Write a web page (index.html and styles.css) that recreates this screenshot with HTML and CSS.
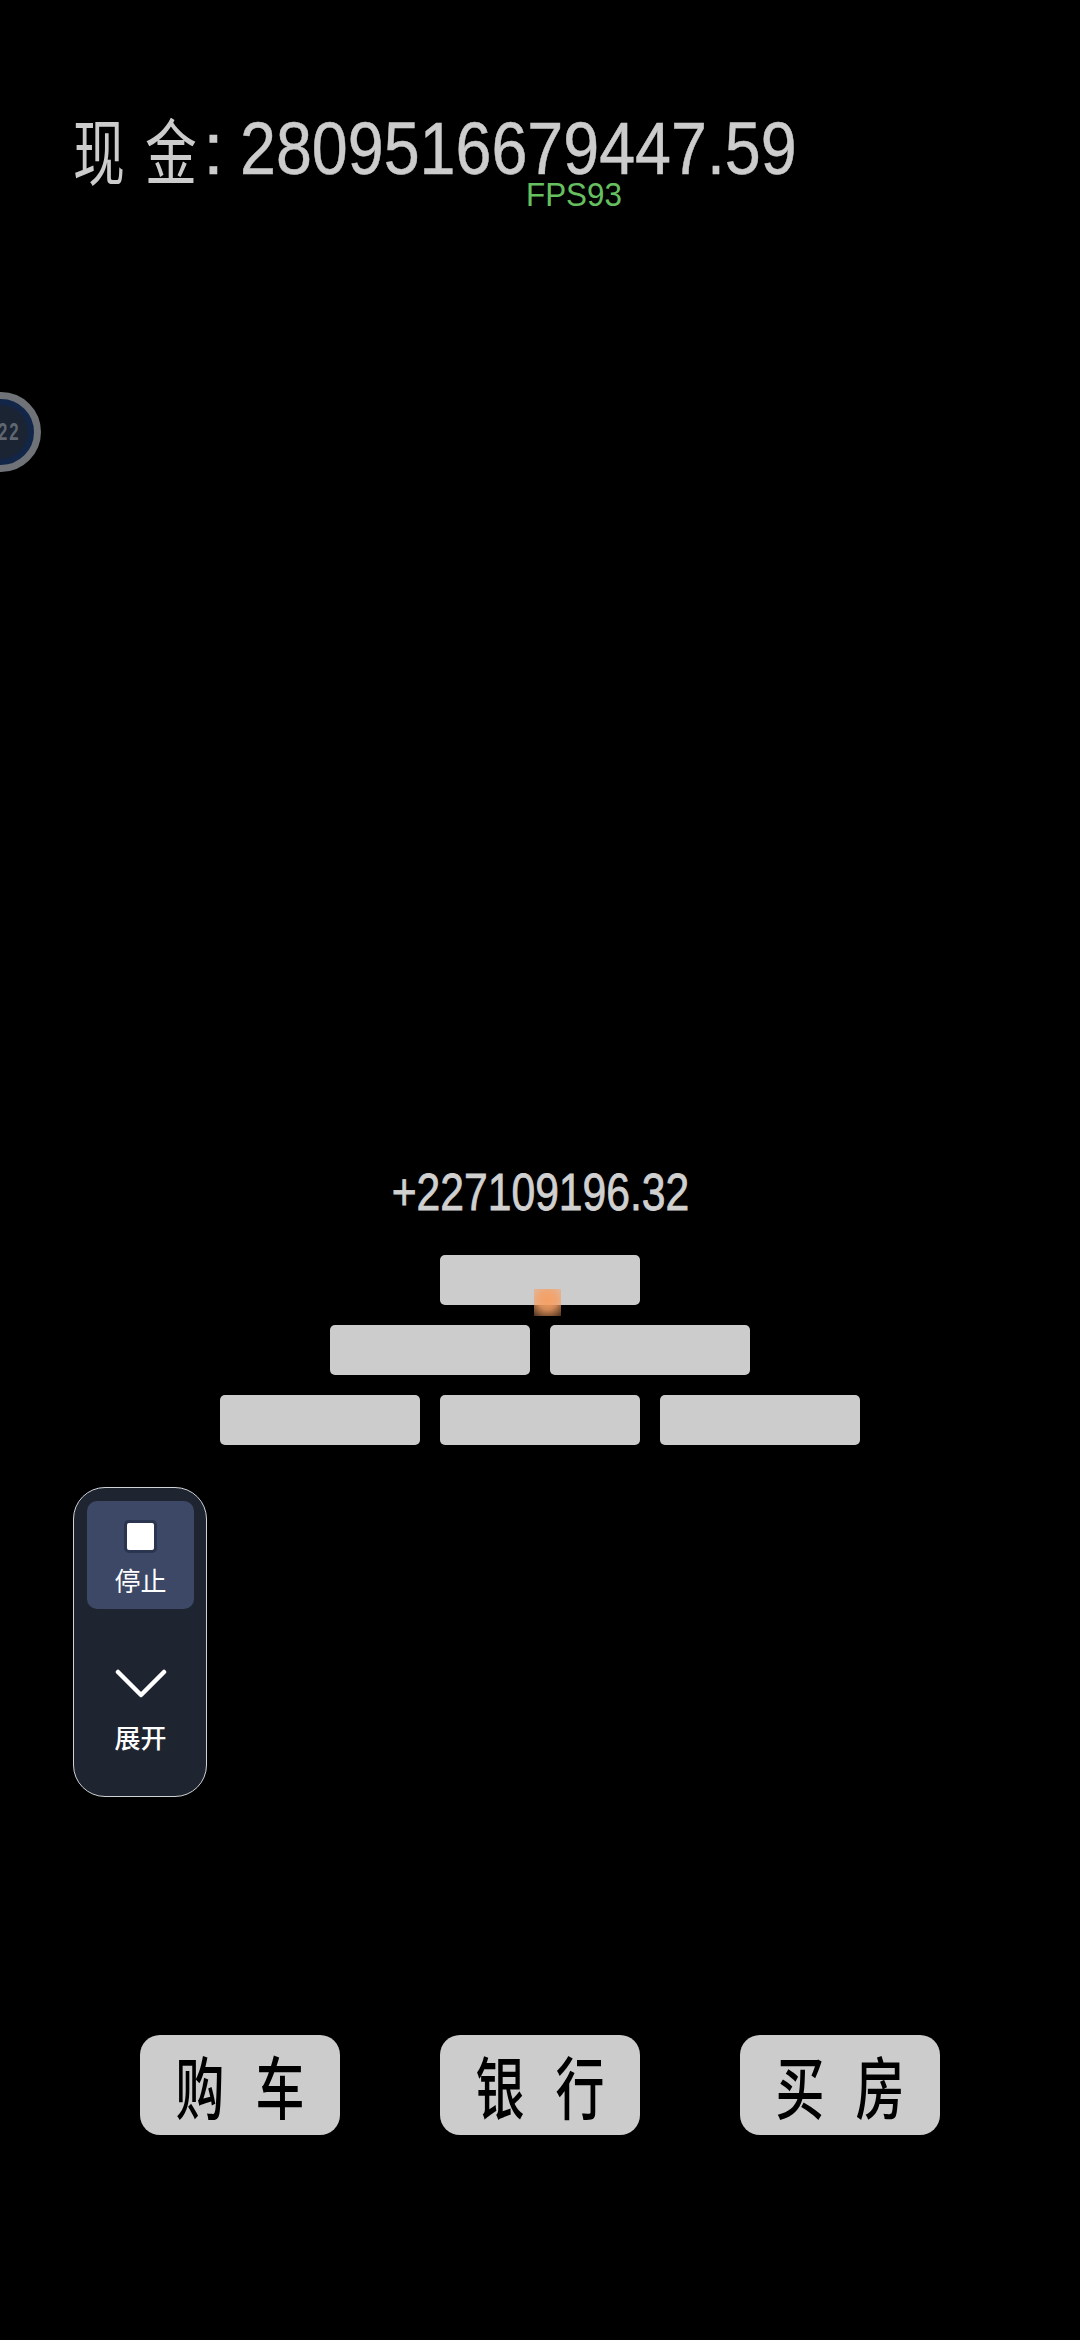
FILE: index.html
```html
<!DOCTYPE html>
<html lang="zh">
<head>
<meta charset="utf-8">
<title>现金</title>
<link rel="stylesheet" href="styles.css">
</head>
<body>
<main class="screen">
  <header class="cash">
    <span class="cash-char">现</span><span class="cash-char">金</span><span class="cash-colon">:</span><span class="cash-value">2809516679447.59</span>
    <span class="fps">FPS93</span>
  </header>

  <aside class="badge"><span class="badge-text">22</span></aside>

  <section class="game">
    <div class="delta"><span class="delta-text">+227109196.32</span></div>
    <div class="pyramid">
      <div class="row"><div class="brick"></div></div>
      <div class="row"><div class="brick"></div><div class="brick"></div></div>
      <div class="row"><div class="brick"></div><div class="brick"></div><div class="brick"></div></div>
      <div class="spark"></div>
    </div>
  </section>

  <section class="panel">
    <div class="panel-btn panel-btn-active">
      <span class="stop-icon"></span>
      <span class="panel-label">停止</span>
    </div>
    <div class="panel-btn">
      <svg class="chevron" viewBox="0 0 52 30" aria-hidden="true"><path d="M3 3 L26 26 L49 3" fill="none" stroke="#fff" stroke-width="4.5" stroke-linecap="round" stroke-linejoin="round"/></svg>
      <span class="panel-label panel-label-strong">展开</span>
    </div>
  </section>

  <nav class="actions">
    <div class="action"><span class="action-char">购</span><span class="action-char">车</span></div>
    <div class="action"><span class="action-char">银</span><span class="action-char">行</span></div>
    <div class="action"><span class="action-char">买</span><span class="action-char">房</span></div>
  </nav>
</main>
</body>
</html>
```
FILE: styles.css
```css
* { box-sizing: border-box; }
html, body { margin: 0; padding: 0; background: #000; }
body { font-family: "Liberation Sans", "Noto Sans CJK SC", sans-serif; }

.screen {
  position: relative;
  width: 1080px;
  height: 2340px;
  overflow: hidden;
  background: #000;
}

.cash {
  position: relative;
  height: 190px;
  padding: 106px 0 0 63px;
  display: flex;
  align-items: center;
  color: #ccc;
}
.cash-char, .cash-colon, .cash-value { display: block; line-height: 84px; height: 84px; white-space: nowrap; flex: none; }
.cash-char {
  width: 72px;
  text-align: center;
  font-family: "Noto Sans CJK SC", sans-serif;
  font-size: 72px;
  transform: scaleX(0.72);
}
.cash-colon {
  width: 37px;
  margin-left: -4px;
  font-size: 75px;
  text-align: left;
  -webkit-text-stroke: 0.5px #ccc;
}
.cash-value {
  font-size: 75px;
  transform: scaleX(0.861);
  transform-origin: left center;
  -webkit-text-stroke: 0.5px #ccc;
}

.fps {
  position: absolute;
  left: 526px;
  top: 176px;
  font-size: 33px;
  line-height: 38px;
  color: #66c060;
  transform: scaleX(0.95);
  transform-origin: left center;
}

.badge {
  position: absolute;
  left: -39px;
  top: 392px;
  width: 80px;
  height: 80px;
  border-radius: 50%;
  border: 7px solid #6f7276;
  background: radial-gradient(circle, #1a2433 0 54%, #12264a 62% 100%);
  display: flex;
  align-items: center;
  justify-content: center;
  padding-left: 17px;
}
.badge-text {
  font-size: 24px;
  font-weight: 700;
  color: #5f6670;
  letter-spacing: 3px;
  transform: scaleX(0.7);
}

.game {
  margin-top: 972px;
  display: flex;
  flex-direction: column;
  align-items: center;
}
.delta { height: 60px; line-height: 60px; color: #d0d0d0; text-align: center; }
.delta-text {
  display: inline-block;
  font-size: 52px;
  transform: scaleX(0.82);
  white-space: nowrap;
  -webkit-text-stroke: 0.8px #d0d0d0;
}

.pyramid {
  position: relative;
  margin-top: 33px;
  display: flex;
  flex-direction: column;
  gap: 20px;
  align-items: center;
}
.row { display: flex; gap: 20px; justify-content: center; }
.brick { width: 200px; height: 50px; background: #ccc; border-radius: 5px; }
.spark {
  position: absolute;
  left: 314px;
  top: 34px;
  width: 27px;
  height: 27px;
  background: radial-gradient(circle farthest-corner at 50% 42%, rgba(245, 160, 100, 1) 0, rgba(245, 160, 100, 0.85) 45%, rgba(245, 160, 100, 0.5) 80%, rgba(245, 160, 100, 0.3) 100%);
}

.panel {
  margin: 42px 0 0 73px;
  width: 134px;
  height: 310px;
  padding: 13px 12px 13px 13px;
  border: 1px solid #cfd2d6;
  border-radius: 32px;
  background: #1f2530;
  display: flex;
  flex-direction: column;
}
.panel-btn {
  width: 107px;
  height: 108px;
  flex: none;
  border-radius: 10px;
  display: flex;
  flex-direction: column;
  align-items: center;
  color: #fff;
}
.panel-btn + .panel-btn { margin-top: 50px; }
.panel-btn-active { background: #3c4866; padding-top: 22px; }
.stop-icon {
  width: 27px;
  height: 27px;
  background: #fff;
  border-radius: 2px;
  box-shadow: 0 0 0 3px #2b3550;
}
.chevron { width: 52px; height: 30px; margin-top: 10px; }
.panel-label {
  font-family: "Noto Sans CJK SC", sans-serif;
  font-size: 26px;
  line-height: 30px;
  margin-top: 15px;
  white-space: nowrap;
}
.panel-label-strong { font-weight: 500; margin-top: 23px; }

.actions {
  position: absolute;
  left: 140px;
  top: 2035px;
  display: flex;
  gap: 100px;
}
.action {
  width: 200px;
  height: 100px;
  background: #ccc;
  border-radius: 20px;
  display: flex;
  align-items: center;
  justify-content: center;
  gap: 12px;
}
.action-char {
  display: block;
  width: 68px;
  text-align: center;
  font-family: "Noto Sans CJK SC", sans-serif;
  font-size: 68px;
  font-weight: 500;
  line-height: 100px;
  color: #000;
  transform: scaleX(0.72);
}
```
